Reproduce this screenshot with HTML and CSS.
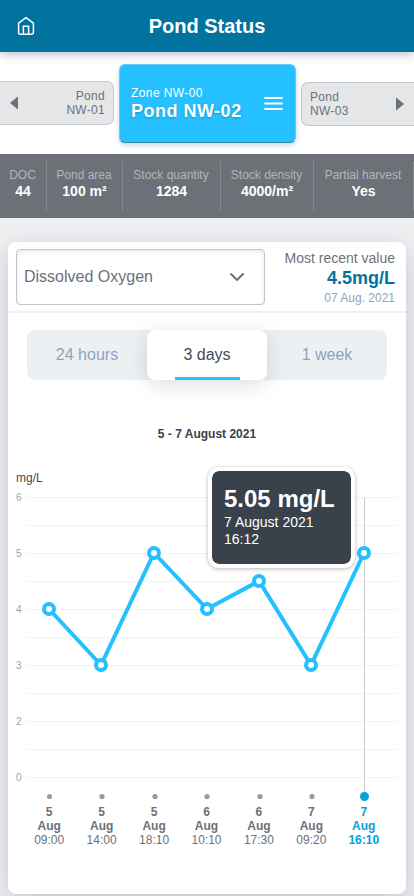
FILE: index.html
```html
<!DOCTYPE html>
<html lang="en">
<head>
<meta charset="utf-8">
<meta name="viewport" content="width=device-width, initial-scale=1">
<title>Pond Status</title>
<link rel="stylesheet" href="styles.css">
</head>
<body>
<header class="topbar">
  <svg class="home" width="18" height="20" viewBox="0 0 18 20" fill="none" stroke="#fff" stroke-width="1.5" stroke-linejoin="round"><path d="M1.600 7.200 9 1.700l7.400 5.500v9.300q0 1.700-1.700 1.700H3.300q-1.700 0-1.700-1.700z"/><path d="M6.400 18.200V10.300h5.200v7.900" stroke-linejoin="miter"/></svg>
  <h1>Pond Status</h1>
</header>
<nav class="ponds">
  <a class="pond prev"><svg width="8" height="14" viewBox="0 0 8 14"><path d="M8 0.500v13L0 7z" fill="#6c7178"/></svg><span>Pond<br>NW-01</span></a>
  <a class="current"><span><small>Zone NW-00</small><strong>Pond NW-02</strong></span>
    <svg width="19" height="14" viewBox="0 0 19 14" stroke="#fff" stroke-width="1.800" stroke-linecap="round"><path d="M1 1h17M1 6.500h17M1 12h17"/></svg></a>
  <a class="pond next"><span>Pond<br>NW-03</span><svg width="8" height="14" viewBox="0 0 8 14"><path d="M0 0.500v13l8-6.500z" fill="#6c7178"/></svg></a>
</nav>
<dl class="stats">
  <div><dt>DOC</dt><dd>44</dd></div>
  <div><dt>Pond area</dt><dd>100 m²</dd></div>
  <div><dt>Stock quantity</dt><dd>1284</dd></div>
  <div><dt>Stock density</dt><dd>4000/m²</dd></div>
  <div><dt>Partial harvest</dt><dd>Yes</dd></div>
</dl>
<main class="card">
  <div class="metric">
    <div class="select"><span>Dissolved Oxygen</span><svg width="16" height="10" viewBox="0 0 16 10" fill="none" stroke="#6c7178" stroke-width="2" stroke-linecap="round" stroke-linejoin="round"><path d="M2 2l6 6 6-6"/></svg></div>
    <div class="recent"><span>Most recent value</span><strong>4.5mg/L</strong><small>07 Aug. 2021</small></div>
  </div>
  <div class="tabs"><a>24 hours</a><a class="active">3 days</a><a>1 week</a></div>
  <h2>5 - 7 August 2021</h2>
  <p class="unit">mg/L</p>
  <section class="chart">
    <svg width="398" height="320" viewBox="8 485 398 320">
      <path class="grid" d="M26 497.500H398M26 525.500H398M26 553.500H398M26 581.500H398M26 609.500H398M26 637.500H398M26 665.500H398M26 693.500H398M26 721.500H398M26 749.500H398M26 777.500H398"/>
      <g class="axis"><text x="16" y="501">6</text><text x="16" y="557">5</text><text x="16" y="613">4</text><text x="16" y="669">3</text><text x="16" y="725">2</text><text x="16" y="781">0</text></g>
      <path class="cursor" d="M364.500 498V796"/>
      <path class="line" d="M49 609 101 665 154 553 207 609 259 581 311 665 364 553"/>
      <g class="points"><circle cx="49" cy="609" r="5"/><circle cx="101" cy="665" r="5"/><circle cx="154" cy="553" r="5"/><circle cx="207" cy="609" r="5"/><circle cx="259" cy="581" r="5"/><circle cx="311" cy="665" r="5"/><circle cx="364" cy="553" r="5"/></g>
      <g fill="#969ca3"><circle cx="49.500" cy="796.500" r="2.600"/><circle cx="102" cy="796.500" r="2.600"/><circle cx="155" cy="796.500" r="2.600"/><circle cx="207" cy="796.500" r="2.600"/><circle cx="260" cy="796.500" r="2.600"/><circle cx="312" cy="796.500" r="2.600"/></g>
      <circle cx="364.500" cy="796.500" r="4.500" fill="#06a0dc"/>
    </svg>
    <div class="tooltip"><strong>5.05 mg/L</strong><span>7 August 2021<br>16:12</span></div>
  </section>
  <div class="dates">
    <div><b>5<br>Aug</b><br>09:00</div>
    <div><b>5<br>Aug</b><br>14:00</div>
    <div><b>5<br>Aug</b><br>18:10</div>
    <div><b>6<br>Aug</b><br>10:10</div>
    <div><b>6<br>Aug</b><br>17:30</div>
    <div><b>7<br>Aug</b><br>09:20</div>
    <div class="selected"><b>7<br>Aug</b><br>16:10</div>
  </div>
</main>
</body>
</html>
```
FILE: styles.css
```css
* { box-sizing: border-box; }
body { margin: 0; height: 896px; overflow: hidden; background: #eeeff1; color: #6c7178; font-family: "Liberation Sans", Arial, sans-serif; }
svg { display: block; flex: none; }
h1, h2, p, dl, dd { margin: 0; }
.topbar { position: relative; height: 52px; padding: 0 17px; display: grid; grid-template-columns: 18px 1fr 18px; align-items: center; background: #02739f; color: #fff; box-shadow: 0 2px 9px rgba(60, 75, 110, .38); }
.topbar h1 { font-size: 20px; line-height: 24px; text-align: center; }
.ponds { height: 102px; display: grid; grid-template-columns: 114px 177px 113px; column-gap: 5px; align-items: start; background: #fff; padding-top: 12px; }
.pond { height: 44px; margin-top: 17px; display: flex; align-items: center; justify-content: space-between; background: #e5e6e8; border: 1px solid #c6c8cb; font-size: 12px; line-height: 14px; letter-spacing: .3px; }
.prev { border-left: 0; border-radius: 0 7px 7px 0; padding: 0 8px 0 10px; text-align: right; }
.next { border-right: 0; border-radius: 7px 0 0 7px; margin-top: 18px; padding: 0 10px 0 8px; }
.current { height: 79px; display: flex; align-items: center; justify-content: space-between; padding: 0 12px 0 11px; border: 1px solid #62cdfa; border-bottom-color: #348aab; border-radius: 6px; background: #24c0ff; color: #fff; box-shadow: 0 2px 5px rgba(40, 80, 110, .25); }
.current small { display: block; font-size: 12px; line-height: 15px; letter-spacing: .4px; }
.current strong { display: block; font-size: 18px; line-height: 21px; letter-spacing: .5px; text-shadow: 0 1px 2px rgba(0, 60, 90, .35); }
.stats { height: 64px; padding: 7px 0; display: grid; grid-template-columns: 47px 76px 98px 93px 100px; background: #6c7178; text-align: center; }
.stats div { height: 50px; padding-top: 6px; border-right: 1px solid #83878d; white-space: nowrap; }
.stats dt { font-size: 12px; line-height: 16px; color: #b2b5b8; margin-left: -1px; }
.stats dd { font-size: 14px; line-height: 17px; font-weight: bold; color: #fff; }
.card { margin: 24px 8px 0; height: 652px; border-radius: 8px; background: #fff; box-shadow: 0 8px 24px rgba(100, 122, 145, .32); }
.metric { height: 71px; display: flex; padding: 7px 11px 0 8px; border-bottom: 2px solid #eeeff1; justify-content: space-between; }
.select { width: 249px; height: 56px; display: flex; align-items: center; justify-content: space-between; padding: 0 19px 0 7px; border: 1px solid #c3c5c7; border-radius: 4px; font-size: 16px; box-shadow: inset 0 2px 5px rgba(0, 0, 0, .09); }
.recent { text-align: right; }
.recent span { display: block; font-size: 14px; line-height: 18px; }
.recent strong { display: block; color: #02739f; font-size: 18px; line-height: 22px; }
.recent small { display: block; color: #8fa3bd; font-size: 12px; line-height: 19px; }
.tabs { width: 360px; height: 50px; margin: 17px 0 0 19px; display: grid; grid-template-columns: repeat(3, 1fr); border-radius: 8px; background: #ecf0f3; color: #8fa3bd; font-size: 16px; line-height: 50px; text-align: center; }
.tabs .active { display: grid; grid-template-columns: 65px; grid-template-rows: 50px 0; justify-content: center; background: #fff; border-radius: 8px; color: #414a56; box-shadow: 0 4px 20px rgba(80, 105, 140, .22); }
.tabs .active::after { content: ""; width: 65px; height: 3px; margin-top: -3px; background: #24c0ff; }
h2 { margin-top: 46px; font-size: 12px; line-height: 16px; text-align: center; color: #383f49; }
.unit { margin: 28px 0 0 8px; font-size: 12px; line-height: 16px; color: #414a56; }
.chart { position: relative; height: 320px; margin-top: -1px; }
.grid { stroke: #f2f3f4; }
.axis { fill: #9da2a9; font-size: 10px; }
.cursor { stroke: #c5c7ca; stroke-width: 1; }
.line { fill: none; stroke: #24c0ff; stroke-width: 4; }
.points { fill: #fff; stroke: #24c0ff; stroke-width: 4; }
.tooltip { position: absolute; left: 200px; top: -18px; width: 147px; height: 101px; padding: 14px 12px 0; border: 4px solid #fff; border-radius: 11px; background: #39414b; background-clip: padding-box; color: #fff; box-shadow: 0 1px 4px rgba(0, 0, 0, .28); white-space: nowrap; }
.tooltip strong { display: block; font-size: 24px; line-height: 27px; margin-bottom: 2px; }
.tooltip span { display: block; font-size: 14px; line-height: 17px; }
.dates { width: 367px; margin-left: 15px; display: grid; grid-template-columns: repeat(7, 1fr); font-size: 12px; line-height: 14px; text-align: center; }
.selected { color: #06a0dc; font-weight: bold; }
```
